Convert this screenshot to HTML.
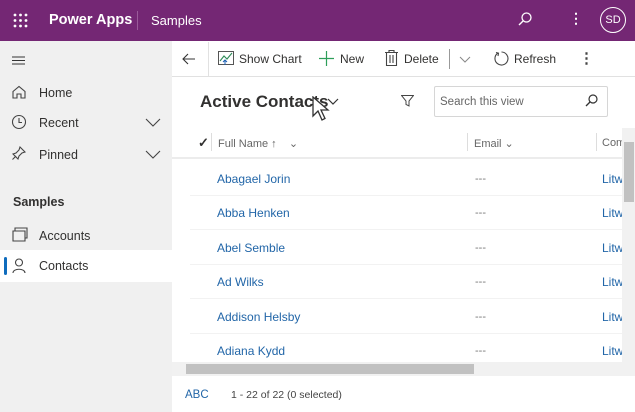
<!DOCTYPE html>
<html><head><style>
*{margin:0;padding:0;box-sizing:border-box}
body{width:635px;height:412px;overflow:hidden;font-family:"Liberation Sans",sans-serif;background:#fff;position:relative;font-size:12px;color:#323130}
.a{position:absolute}
.top{left:0;top:0;width:635px;height:41px;background:#742774;color:#fff}
.side{left:0;top:41px;width:172px;height:371px;background:#f0f0f0}
.ni{position:absolute;left:39px;font-size:12.5px;color:#323130}
.row{position:absolute;left:217px;font-size:12px;color:#2266a8}
.dash{position:absolute;left:475px;color:#777;font-size:11px}
.lit{position:absolute;left:602px;color:#2266a8}
.cb{position:absolute;top:52px;font-size:12px}
</style></head><body>
<div class="a top">
 <svg class="a" style="left:13px;top:13px" width="15" height="15"><g fill="#fff"><circle cx="2" cy="2" r="1.4"/><circle cx="7.5" cy="2" r="1.4"/><circle cx="13" cy="2" r="1.4"/><circle cx="2" cy="7.5" r="1.4"/><circle cx="7.5" cy="7.5" r="1.4"/><circle cx="13" cy="7.5" r="1.4"/><circle cx="2" cy="13" r="1.4"/><circle cx="7.5" cy="13" r="1.4"/><circle cx="13" cy="13" r="1.4"/></g></svg>
 <div class="a" style="left:49px;top:12px;font-size:14.5px;font-weight:bold">Power Apps</div>
 <div class="a" style="left:137px;top:11px;width:1px;height:19px;background:#9a5a9a"></div>
 <div class="a" style="left:151px;top:13px;font-size:13px">Samples</div>
 <svg class="a" style="left:517px;top:11px" width="16" height="16"><circle cx="9.5" cy="6.5" r="4.5" fill="none" stroke="#fff" stroke-width="1.3"/><path d="M6.3 9.7L2 14" stroke="#fff" stroke-width="1.4"/></svg>
 <div class="a" style="left:569px;top:10px;font-size:14px;font-weight:bold">⋮</div>
 <div class="a" style="left:600px;top:7px;width:26px;height:26px;border:1.3px solid #fff;border-radius:50%;font-size:11px;text-align:center;line-height:24px">SD</div>
</div>
<div class="a side">
 <svg class="a" style="left:12px;top:15px" width="14" height="10"><path d="M0 1H13M0 4.5H13M0 8H13" stroke="#333" stroke-width="1.1"/></svg>
 <svg class="a" style="left:12px;top:44px" width="14" height="14"><path d="M1 6.5L7 1.5L13 6.5V13H9V9H5V13H1Z" fill="none" stroke="#444" stroke-width="1.1"/></svg>
 <div class="ni" style="top:45px">Home</div>
 <svg class="a" style="left:11px;top:73px" width="16" height="16"><circle cx="8" cy="8" r="6.5" fill="none" stroke="#444" stroke-width="1.1"/><path d="M8 4V8.5H11" fill="none" stroke="#444" stroke-width="1.1"/></svg>
 <div class="ni" style="top:75px">Recent</div>
 <svg class="a" style="left:145px;top:77px" width="16" height="9"><path d="M1 1L8 8L15 1" fill="none" stroke="#444" stroke-width="1.1"/></svg>
 <svg class="a" style="left:12px;top:105px" width="14" height="14"><path d="M8 1L13 6L10 7L7 10L6 13L1 8L4 7L7 4Z M4 10L0.5 13.5" fill="none" stroke="#444" stroke-width="1.1"/></svg>
 <div class="ni" style="top:107px">Pinned</div>
 <svg class="a" style="left:145px;top:109px" width="16" height="9"><path d="M1 1L8 8L15 1" fill="none" stroke="#444" stroke-width="1.1"/></svg>
 <div class="a" style="left:13px;top:154px;font-size:12.5px;font-weight:bold">Samples</div>
 <svg class="a" style="left:12px;top:186px" width="16" height="15"><path d="M1 4H13V14H1Z M3 4V1H15V11H13" fill="none" stroke="#444" stroke-width="1.1"/></svg>
 <div class="ni" style="top:188px">Accounts</div>
 <div class="a" style="left:0;top:209px;width:172px;height:32px;background:#fff"></div>
 <div class="a" style="left:4px;top:216px;width:3px;height:18px;background:#0f6cbd;border-radius:2px"></div>
 <svg class="a" style="left:12px;top:217px" width="14" height="16"><circle cx="7" cy="4.5" r="3.5" fill="none" stroke="#444" stroke-width="1.1"/><path d="M1 15C1 10 13 10 13 15" fill="none" stroke="#444" stroke-width="1.1"/></svg>
 <div class="ni" style="top:218px">Contacts</div>
</div>
<div class="a" style="left:172px;top:41px;width:463px;height:36px;border-bottom:1px solid #e1e1e1"></div>
<svg class="a" style="left:182px;top:53px" width="14" height="12"><path d="M13 6H1M6 1L1 6L6 11" fill="none" stroke="#333" stroke-width="1.1"/></svg>
<div class="a" style="left:208px;top:42px;width:1px;height:34px;background:#e1e1e1"></div>
<svg class="a" style="left:218px;top:51px" width="16" height="15"><rect x="0.5" y="0.5" width="15" height="13" fill="none" stroke="#555"/><path d="M2 10L6 5L9 8L14 2" fill="none" stroke="#2e8b57" stroke-width="1.1"/><path d="M7 14V9M5 11L7 9L9 11" fill="none" stroke="#1a5fb4"/></svg>
<div class="cb" style="left:239px">Show Chart</div>
<svg class="a" style="left:319px;top:51px" width="15" height="15"><path d="M7.5 0V15M0 7.5H15" stroke="#2e9e5a" stroke-width="1.2"/></svg>
<div class="cb" style="left:340px">New</div>
<svg class="a" style="left:385px;top:50px" width="13" height="16"><path d="M0 2.5H13M4 2.5V0.5H9V2.5M1.5 2.5V15.5H11.5V2.5M5 5V13M8 5V13" fill="none" stroke="#444" stroke-width="1.1"/></svg>
<div class="cb" style="left:404px">Delete</div>
<div class="a" style="left:449px;top:49px;width:1px;height:20px;background:#999"></div>
<svg class="a" style="left:459px;top:56px" width="12" height="7"><path d="M1 1L6 6L11 1" fill="none" stroke="#888"/></svg>
<svg class="a" style="left:494px;top:51px" width="15" height="15"><path d="M4 2A6.5 6.5 0 1 0 7.5 1M2 1.5L4.5 2.2L4 5" fill="none" stroke="#444" stroke-width="1.1"/></svg>
<div class="cb" style="left:514px">Refresh</div>
<div class="a" style="left:579px;top:49px;font-size:15px;font-weight:bold;color:#444">⋮</div>
<div class="a" style="left:200px;top:92px;font-size:17px;font-weight:bold;color:#323130">Active Contacts</div>
<svg class="a" style="left:327px;top:98px" width="12" height="7"><path d="M1 1L6 6L11 1" fill="none" stroke="#333" stroke-width="1.2"/></svg>
<svg class="a" style="left:312px;top:96px" width="20" height="28"><path d="M1 1V20L6 15L10 24L13 22.5L9 14H16Z" fill="#fff" stroke="#333" stroke-width="1.3"/></svg>
<svg class="a" style="left:401px;top:95px" width="13" height="12"><path d="M0.5 0.5H12.5L8 6V11L5 9.5V6Z" fill="none" stroke="#444"/></svg>
<div class="a" style="left:434px;top:86px;width:174px;height:31px;border:1px solid #d6d6d6;border-radius:2px"></div>
<div class="a" style="left:440px;top:96px;font-size:11.5px;color:#666">Search this view</div>
<svg class="a" style="left:585px;top:94px" width="13" height="13"><circle cx="8" cy="5" r="4" fill="none" stroke="#333" stroke-width="1.2"/><path d="M5 8L1 12" stroke="#333" stroke-width="1.3"/></svg>
<div class="a" style="left:172px;top:128px;width:450px;height:31px;border-bottom:2px solid #ececec"></div>
<div class="a" style="left:198px;top:135px;font-size:13px;font-weight:bold">✓</div>
<div class="a" style="left:211px;top:133px;width:1px;height:18px;background:#ddd"></div>
<div class="a" style="left:218px;top:137px;font-size:11px;color:#666">Full Name ↑ &nbsp;&nbsp; ⌄</div>
<div class="a" style="left:467px;top:133px;width:1px;height:18px;background:#ddd"></div>
<div class="a" style="left:474px;top:137px;font-size:11px;color:#666">Email ⌄</div>
<div class="a" style="left:596px;top:133px;width:1px;height:18px;background:#ddd"></div>
<div class="a" style="left:602px;top:137px;font-size:11px;color:#666">Com</div>
<div class="row" style="top:172px">Abagael Jorin</div><div class="dash" style="top:173px">---</div><div class="lit" style="top:172px">Litw</div>
<div class="row" style="top:206px">Abba Henken</div><div class="dash" style="top:207px">---</div><div class="lit" style="top:206px">Litw</div>
<div class="row" style="top:241px">Abel Semble</div><div class="dash" style="top:242px">---</div><div class="lit" style="top:241px">Litw</div>
<div class="row" style="top:275px">Ad Wilks</div><div class="dash" style="top:276px">---</div><div class="lit" style="top:275px">Litw</div>
<div class="row" style="top:310px">Addison Helsby</div><div class="dash" style="top:311px">---</div><div class="lit" style="top:310px">Litw</div>
<div class="row" style="top:344px">Adiana Kydd</div><div class="dash" style="top:345px">---</div><div class="lit" style="top:344px">Litw</div>
<div class="a" style="left:190px;top:195px;width:432px;height:1px;background:#f2f2f2"></div>
<div class="a" style="left:190px;top:229px;width:432px;height:1px;background:#f2f2f2"></div>
<div class="a" style="left:190px;top:264px;width:432px;height:1px;background:#f2f2f2"></div>
<div class="a" style="left:190px;top:298px;width:432px;height:1px;background:#f2f2f2"></div>
<div class="a" style="left:190px;top:333px;width:432px;height:1px;background:#f2f2f2"></div>
<div class="a" style="left:622px;top:128px;width:13px;height:234px;background:#f1f1f1"></div>
<div class="a" style="left:624px;top:142px;width:10px;height:60px;background:#c1c1c1"></div>
<div class="a" style="left:172px;top:362px;width:450px;height:14px;background:#f1f1f1"></div>
<div class="a" style="left:186px;top:364px;width:288px;height:10px;background:#c1c1c1"></div>
<div class="a" style="left:622px;top:362px;width:13px;height:14px;background:#f1f1f1"></div>
<div class="a" style="left:185px;top:389px;font-size:11.5px;color:#2266a8">ABC</div>
<div class="a" style="left:231px;top:389px;font-size:10.5px;color:#444">1 - 22 of 22 (0 selected)</div>
</body></html>
